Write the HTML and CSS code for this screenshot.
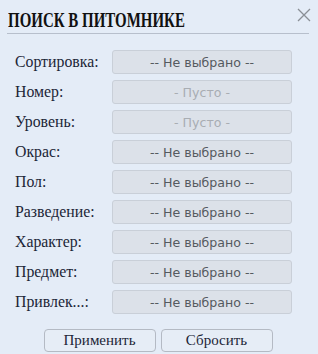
FILE: index.html
```html
<!DOCTYPE html>
<html lang="ru">
<head>
<meta charset="utf-8">
<link rel="stylesheet" href="styles.css">
</head>
<body>
<div class="dialog">
  <div class="header">
    <h1 class="title"><span class="title-text">Поиск в питомнике</span></h1>
    <button class="close" aria-label="Закрыть">
      <svg width="14" height="14" viewBox="0 0 14 14"><path d="M1 1L13 13M13 1L1 13" stroke="#8a8f96" stroke-width="1.3" fill="none"/></svg>
    </button>
  </div>
  <div class="form">
    <div class="row"><span class="label">Сортировка:</span><div class="select">-- Не выбрано --</div></div>
    <div class="row"><span class="label">Номер:</span><div class="select empty">- Пусто -</div></div>
    <div class="row"><span class="label">Уровень:</span><div class="select empty">- Пусто -</div></div>
    <div class="row"><span class="label">Окрас:</span><div class="select">-- Не выбрано --</div></div>
    <div class="row"><span class="label">Пол:</span><div class="select">-- Не выбрано --</div></div>
    <div class="row"><span class="label">Разведение:</span><div class="select">-- Не выбрано --</div></div>
    <div class="row"><span class="label">Характер:</span><div class="select">-- Не выбрано --</div></div>
    <div class="row"><span class="label">Предмет:</span><div class="select">-- Не выбрано --</div></div>
    <div class="row"><span class="label">Привлек...:</span><div class="select">-- Не выбрано --</div></div>
  </div>
  <div class="actions">
    <button class="btn">Применить</button>
    <button class="btn">Сбросить</button>
  </div>
</div>
</body>
</html>
```
FILE: styles.css
```css
html, body {
  margin: 0;
  padding: 0;
  background: #e4ecf7;
}
.dialog {
  width: 318px;
  height: 354px;
  box-sizing: border-box;
  padding: 0 9px 0 7px;
  font-family: "Liberation Serif", "Times New Roman", serif;
}
.header {
  position: relative;
  height: 33px;
  border-bottom: 1px solid #b7bfcc;
}
.title {
  margin: 0;
  padding: 9px 0 0 1px;
  font-family: "Liberation Serif", "Times New Roman", serif;
  font-weight: bold;
  font-size: 22px;
  line-height: 22px;
  color: #111;
  text-transform: uppercase;
  white-space: nowrap;
}
.title-text {
  display: inline-block;
  transform: scaleX(0.68);
  transform-origin: left center;
}
.close {
  position: absolute;
  right: -2px;
  top: 8px;
  padding: 0;
  border: 0;
  background: none;
  width: 14px;
  height: 14px;
  line-height: 0;
}
.form {
  display: flex;
  flex-direction: column;
  gap: 6px;
  padding: 16px 0 0 8px;
}
.row {
  display: flex;
  align-items: center;
  height: 24px;
}
.label {
  width: 97px;
  font-family: "Liberation Serif", "Times New Roman", serif;
  font-size: 15.8px;
  color: #1b2536;
}
.select {
  width: 180px;
  height: 24px;
  box-sizing: border-box;
  border: 1px solid #c9cfd8;
  border-radius: 3px;
  background: #dce1e9;
  font-family: "DejaVu Sans", Verdana, sans-serif;
  font-size: 12.6px;
  color: #555a60;
  display: flex;
  align-items: center;
  justify-content: center;
}
.select.empty {
  color: #a9adb3;
}
.actions {
  display: flex;
  justify-content: center;
  gap: 5px;
  padding: 15px 0 0 0;
}
.btn {
  width: 112px;
  height: 23px;
  box-sizing: border-box;
  border: 1px solid #b4bac4;
  border-radius: 4px;
  background: #e6edf6;
  font-family: "Liberation Serif", "Times New Roman", serif;
  font-size: 15px;
  color: #1b2536;
  padding: 0;
}
```
